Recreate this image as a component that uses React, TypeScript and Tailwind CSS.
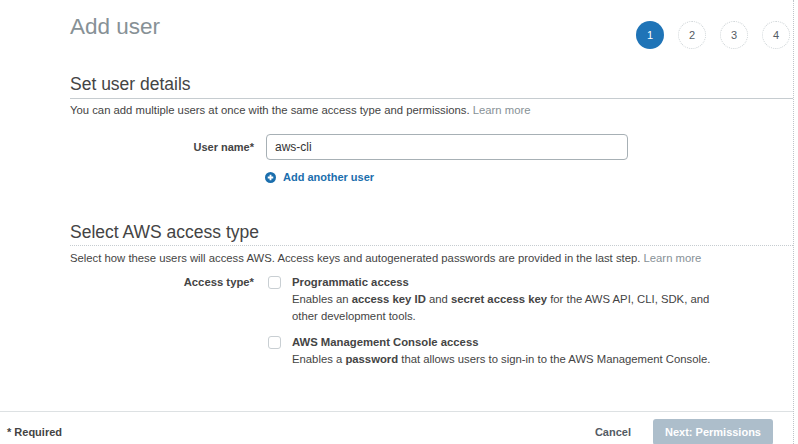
import { useState } from "react";

const steps = [1, 2, 3, 4];

function PlusCircle() {
  return (
    <svg width="11" height="11" viewBox="0 0 12 12" className="shrink-0">
      <circle cx="6" cy="6" r="6" fill="#1a6ead" />
      <path d="M6 3v6M3 6h6" stroke="#fff" strokeWidth="2" />
    </svg>
  );
}

function Checkbox({ checked, onChange }: { checked: boolean; onChange: () => void }) {
  return (
    <button
      onClick={onChange}
      className="mt-[2px] w-[13px] h-[13px] shrink-0 rounded-[3px] border border-[#c9cfd3] bg-white"
    />
  );
}

export default function App() {
  const [userName, setUserName] = useState("aws-cli");
  const [programmatic, setProgrammatic] = useState(false);
  const [consoleAccess, setConsoleAccess] = useState(false);

  return (
    <div className="w-[798px] h-[444px] bg-white overflow-hidden text-[#444] font-['Liberation_Sans',Arial,sans-serif]">
      <div className="w-[794px] h-full border-r border-dotted border-[#bfc5c9] flex flex-col">
        {/* Header */}
        <div className="flex justify-between pl-[70px] pr-[3px] pt-[14px]">
          <h1 className="text-[22.5px] leading-[26px] text-[#879196]">Add user</h1>
          <div className="flex gap-[14px] mt-[7px]">
            {steps.map((s) =>
              s === 1 ? (
                <div
                  key={s}
                  className="w-[28px] h-[28px] rounded-full bg-[#1f74b7] text-white text-[11px] flex items-center justify-center"
                >
                  {s}
                </div>
              ) : (
                <div
                  key={s}
                  className="w-[28px] h-[28px] rounded-full border border-dotted border-[#cdd3d6] text-[#545b64] text-[11px] flex items-center justify-center"
                >
                  {s}
                </div>
              )
            )}
          </div>
        </div>

        {/* Set user details */}
        <div className="pl-[70px] mt-[25px]">
          <h2 className="text-[17.5px] leading-[20px] pb-[4px] border-b border-[#c6ccd0]">Set user details</h2>
          <p className="mt-[4px] text-[11.3px] leading-[14px]">
            You can add multiple users at once with the same access type and permissions.{" "}
            <span className="text-[#879196]">Learn more</span>
          </p>

          <div className="flex items-center mt-[17px]">
            <label className="w-[184px] text-right text-[11px] font-bold">User name*</label>
            <input
              value={userName}
              onChange={(e) => setUserName(e.target.value)}
              className="ml-[12px] w-[362px] h-[26px] rounded-[4px] border border-[#a7b0b5] px-[8px] text-[12px] text-[#333] outline-none"
            />
          </div>
          <div className="flex items-center gap-[7px] ml-[195px] mt-[10px] text-[11px] leading-[14px] font-bold text-[#1a6ead]">
            <PlusCircle />
            <span>Add another user</span>
          </div>
        </div>

        {/* Access type */}
        <div className="pl-[70px] mt-[38px]">
          <h2 className="text-[17.5px] leading-[20px] pb-[3px] border-b border-dotted border-[#c6ccd0]">
            Select AWS access type
          </h2>
          <p className="mt-[5px] text-[11.3px] leading-[14px]">
            Select how these users will access AWS. Access keys and autogenerated passwords are provided in the last step.{" "}
            <span className="text-[#879196]">Learn more</span>
          </p>

          <div className="flex mt-[9px] text-[11.3px] leading-[17px]">
            <label className="w-[184px] text-right font-bold">Access type*</label>
            <div className="ml-[14px] flex flex-col">
              <div className="flex gap-[11px]">
                <Checkbox checked={programmatic} onChange={() => setProgrammatic(!programmatic)} />
                <div>
                  <div className="font-bold">Programmatic access</div>
                  <div>
                    Enables an <b>access key ID</b> and <b>secret access key</b> for the AWS API, CLI, SDK, and
                    <br />
                    other development tools.
                  </div>
                </div>
              </div>
              <div className="flex gap-[11px] mt-[9px]">
                <Checkbox checked={consoleAccess} onChange={() => setConsoleAccess(!consoleAccess)} />
                <div>
                  <div className="font-bold">AWS Management Console access</div>
                  <div>
                    Enables a <b>password</b> that allows users to sign-in to the AWS Management Console.
                  </div>
                </div>
              </div>
            </div>
          </div>
        </div>

        {/* Footer */}
        <div className="mt-auto h-[33px] border-t border-[#dde1e3] flex items-start pt-[7px] pl-[7px] pr-[20px]">
          <div className="h-[26px] flex items-center text-[11px] font-bold">* Required</div>
          <div className="ml-auto flex items-center gap-[22px]">
            <button className="text-[11px] font-bold text-[#545b64]">Cancel</button>
            <button className="w-[120px] h-[26px] rounded-[3px] bg-[#adbecb] text-white text-[11px] font-bold">
              Next: Permissions
            </button>
          </div>
        </div>
      </div>
    </div>
  );
}
